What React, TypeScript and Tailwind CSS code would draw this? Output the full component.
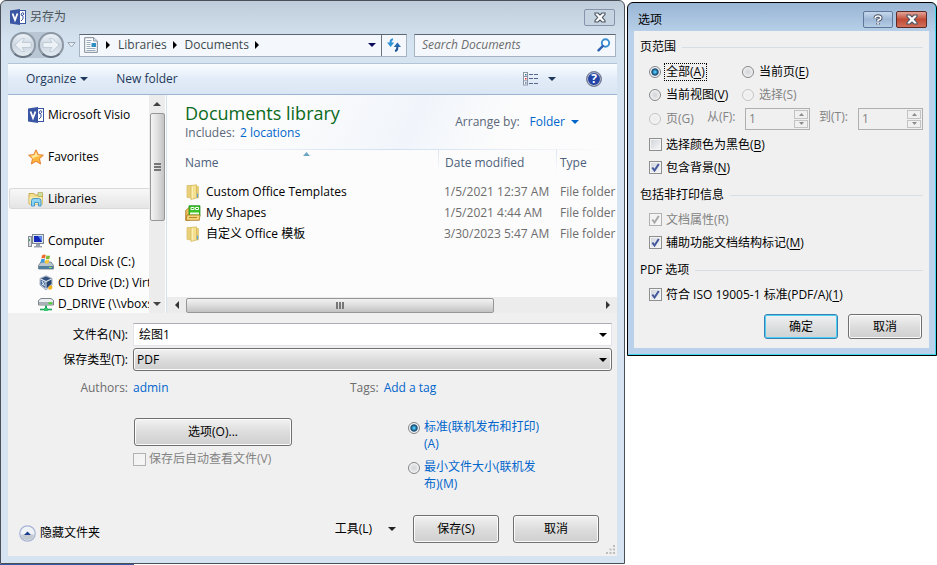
import React, { type ReactNode } from "react";

const FACE = "border border-[#707070] rounded-[3px] bg-linear-to-b from-[#f2f2f2] from-0% via-[#dddddd] via-50% to-[#cfcfcf] shadow-[inset_0_0_0_1px_#fbfbfb]";

/* ---------- icons ---------- */

function VisioIcon() {
  return (
    <svg width="16" height="16" viewBox="0 0 16 16" className="shrink-0">
      <rect x="8.5" y="1.500" width="7" height="13" fill="#fff" stroke="#3955a3" />
      <path d="M0 1.500 10 0v16L0 14.500z" fill="#3955a3" />
      <path d="M2.500 4.500 5 11l2.500-6.500" fill="none" stroke="#fff" strokeWidth="1.800" />
      <path d="M11 5l2-1.500L14 5l-2 2zM11 12l2-2V7" fill="none" stroke="#3955a3" />
    </svg>
  );
}

function StarIcon() {
  return (
    <svg width="16" height="16" viewBox="0 0 16 16" className="shrink-0">
      <path d="M8 .8l2.200 4.800 5.200.6-3.900 3.500 1.100 5.300L8 12.300 3.400 15l1.100-5.300L.6 6.200l5.200-.6z" fill="#fdb73c" stroke="#e2762a" strokeWidth=".9" />
      <path d="M8 2.800l1.500 3.500 3.300.4-5 1.200-4 2 .9-.8L2.800 6.700l3.600-.5z" fill="#ffe79b" />
    </svg>
  );
}

function LibrariesIcon() {
  return (
    <svg width="16" height="16" viewBox="0 0 16 16" className="shrink-0">
      <path d="M1 2.500h5l1 1.500h7.500v9H1z" fill="#f3df8d" stroke="#c9a94d" />
      <path d="M10 1.500h4.500v4H10z" fill="#c7e29b" stroke="#b39b48" strokeWidth=".6" />
      <path d="M1.500 6h13v7h-13z" fill="#f8e9a8" />
      <path d="M3.500 15V9.500Q3.500 7.500 6 7.500h4.500q2.500 0 2.500 2V15h-2.500v-3.500h-4V15z" fill="#8fd3f3" stroke="#3d93c8" strokeWidth=".9" />
    </svg>
  );
}

function ComputerIcon() {
  return (
    <svg width="16" height="16" viewBox="0 0 16 16" className="shrink-0">
      <rect x=".5" y="3.500" width="3" height="10" fill="#d9dde2" stroke="#868d96" />
      <path d="M1.500 6v2" stroke="#35a845" />
      <rect x="4.500" y="1.500" width="11" height="9" fill="#dfe4ea" stroke="#7c8794" />
      <path d="M6 3h8v6H6z" fill="#1429b8" />
      <path d="M10 3h4v6z" fill="#5a86ea" />
      <path d="M8 11h4v2H8zM6 13h8v1.500H6z" fill="#9aa3ad" />
    </svg>
  );
}

function LocalDiskIcon() {
  return (
    <svg width="16" height="16" viewBox="0 0 16 16" className="shrink-0">
      <path d="M3 8h10l2.500 3.500v3.500H.5v-3.500z" fill="#b9c6d0" stroke="#647482" strokeWidth=".8" />
      <path d="M1 12h14v3H1z" fill="#4f7f9c" />
      <path d="M11 13h2.500v1H11z" fill="#8df05a" />
      <path d="M4 1.500Q6 0 7.700 1L7 4.500q-1.800-1-3.600 0z" fill="#ee6b2d" />
      <path d="M8.500 1.200q1.800 1 3.600.2l-.8 3.500q-1.700.8-3.500-.2z" fill="#7dbb35" />
      <path d="M3.200 5.300q1.900-1 3.700 0l-.8 3.500q-1.800-1-3.700 0z" fill="#3b98dc" />
      <path d="M7.600 5.600q1.800 1 3.600.1l-.8 3.500q-1.800.8-3.500-.2z" fill="#fbc72e" />
    </svg>
  );
}

function CdDriveIcon() {
  return (
    <svg width="16" height="16" viewBox="0 0 16 16" className="shrink-0">
      <path d="M8 .8l6 2.700v6.500L8 15 2 10V3.500z" fill="#dfe6ee" stroke="#7f8fa3" strokeWidth=".7" />
      <path d="M8 1.500l5 2-5 2.500-5-2.500z" fill="#31507e" />
      <path d="M2.500 4.500 7.500 7v6.500l-5-4z" fill="#4d6f9f" />
      <path d="M4 6l2.500 5M4 10l2.500-2.500M10 8l2.500-1.500v3L10 11z" fill="none" stroke="#e8eef6" />
      <path d="M8.500 7 13.500 4.500V9l-5 4.500z" fill="#27446f" />
      <path d="M10 12.500l2.500-2.500 2 1.500-.5 2.500-3 1z" fill="#f6b420" />
    </svg>
  );
}

function NetworkDriveIcon() {
  return (
    <svg width="16" height="16" viewBox="0 0 16 16" className="shrink-0">
      <path d="M3 2.500h10l2.500 2v4.500H.5V4.500z" fill="#eceff1" stroke="#6f777e" strokeWidth=".9" />
      <path d="M1 6h14v3H1z" fill="#a9b0b6" />
      <path d="M10.500 6.300H14v2h-3.500z" fill="#45d62c" />
      <path d="M8 9.500v4" stroke="#1fa85b" strokeWidth="2" />
      <path d="M2 13.500h12" stroke="#1fa85b" strokeWidth="1.600" />
      <path d="M6 12h4v3H6z" fill="#35c873" />
    </svg>
  );
}

function FolderIcon() {
  return (
    <svg width="16" height="16" viewBox="0 0 16 16" className="shrink-0">
      <path d="M2 1.500h5v12.500l-5-.5z" fill="#ead07a" stroke="#d6bb62" strokeWidth=".7" />
      <path d="M6 1.500 11.500.800V14L6 15.500z" fill="#f5e08f" stroke="#cfb152" strokeWidth=".7" />
      <path d="M11.500 2.500h2V14h-2z" fill="#e9cd6e" stroke="#cfb152" strokeWidth=".5" />
      <path d="M12.500 9.500v4" stroke="#5fa6de" strokeWidth="1.200" />
      <path d="M7.200 2.500v12" stroke="#fff6cb" />
    </svg>
  );
}

function ShapesIcon() {
  return (
    <svg width="16" height="16" viewBox="0 0 16 16" className="shrink-0">
      <path d="M.7 5.500 4 2.500h2V14l-2 1.300H.7z" fill="#e9c05a" stroke="#a8741d" strokeWidth=".8" />
      <path d="M4 .7h11v10H4z" fill="#3ec22c" stroke="#1c8b12" strokeWidth=".7" />
      <path d="M6 2.500h3v2H6zM10.500 2.500h3v2h-3z" fill="#2fa51f" stroke="#f0ffec" />
      <path d="M5 7.500h9v2H5z" fill="#f0ffec" />
      <path d="M2 10h13l-.7 5.300H1z" fill="#f3d478" stroke="#a8741d" strokeWidth=".8" />
      <path d="M4 12.500h8" stroke="#b8862b" />
    </svg>
  );
}

function DocumentIcon() {
  return (
    <svg width="14" height="16" viewBox="0 0 14 16" className="shrink-0">
      <path d="M.7.700h9L13.300 4v11.300H.7z" fill="#fff" stroke="#7b8796" />
      <path d="M9.500.700V4h3.800" fill="#dde3ea" stroke="#7b8796" strokeWidth=".8" />
      <path d="M2.500 3.500h5M2.500 5.500h4M2.500 7.500h4M2.500 9.500h4M2.500 11.500h9M2.500 13.500h9" stroke="#8ea0b6" strokeWidth=".9" />
      <path d="M7.500 6h4.500v4H7.500z" fill="#2f8fc2" />
    </svg>
  );
}

function RefreshIcon() {
  return (
    <svg width="14" height="14" viewBox="0 0 14 14">
      <path d="M6 1.200Q3.600 1.500 3.600 4v1" fill="none" stroke="#2f93d6" strokeWidth="2" />
      <path d="M0 4.500h7.200L3.600 9z" fill="#2f93d6" />
      <path d="M8 13q2.300-.5 2.300-3V8.500" fill="none" stroke="#1f5596" strokeWidth="2" />
      <path d="M6.800 9H14l-3.600-4.500z" fill="#2468ad" />
    </svg>
  );
}

function SearchIcon() {
  return (
    <svg width="14" height="14" viewBox="0 0 14 14" className="shrink-0">
      <circle cx="8.500" cy="5" r="3.700" fill="#fff" stroke="#3a8fd2" strokeWidth="1.900" />
      <path d="M5.800 8 1.500 12.300" stroke="#2a5fae" strokeWidth="2.400" strokeLinecap="round" />
    </svg>
  );
}

function ViewIcon() {
  return (
    <svg width="16" height="14" viewBox="0 0 16 14">
      <rect x=".5" y=".5" width="4" height="12.500" fill="#fff" stroke="#8a97a8" />
      <path d="M1 4.500h3M1 8.800h3" stroke="#8a97a8" />
      <path d="M2 2h1.500v1.500H2z" fill="#4a6f9f" />
      <path d="M2 6h1.500v1.500H2z" fill="#d0302f" />
      <path d="M2 10.300h1.500v1.500H2z" fill="#4a6f9f" />
      <path d="M6 2.500h4M11 2.500h4M6 6.500h4M11 6.500h4M6 11.500h4M11 11.500h4" stroke="#54698a" />
    </svg>
  );
}

function Arrow({ dir = "down", color = "#000" }: { dir?: "down" | "up" | "left" | "right"; color?: string }) {
  if (dir === "down") return <svg width="8" height="4" viewBox="0 0 8 4"><path d="M0 0h8L4 4z" fill={color} /></svg>;
  if (dir === "up") return <svg width="8" height="4" viewBox="0 0 8 4"><path d="M0 4h8L4 0z" fill={color} /></svg>;
  if (dir === "left") return <svg width="4" height="8" viewBox="0 0 4 8"><path d="M4 0v8L0 4z" fill={color} /></svg>;
  return <svg width="4" height="8" viewBox="0 0 4 8"><path d="M0 0v8l4-4z" fill={color} /></svg>;
}

function CrossIcon() {
  return (
    <svg width="14" height="11" viewBox="0 0 14 11">
      <path d="M2 1h3l2 2 2-2h3v1.500L9.300 5.500 12 8.500V10H9L7 8l-2 2H2V8.500l2.700-3L2 2.500z" fill="#fff" stroke="#4a5263" strokeWidth="1.100" />
    </svg>
  );
}

function NavCircle({ dir }: { dir: "left" | "right" }) {
  return (
    <button type="button" aria-label={dir === "left" ? "Back" : "Forward"} className="size-[26px] rounded-full border-2 border-[#8d98a5] border-b-[#66727f] bg-linear-to-b from-[#eef3f8] via-[#ccd6e1] to-[#e4ebf2] flex items-center justify-center">
      <svg width="18" height="16" viewBox="0 0 18 16">
        {dir === "left" ? (
          <path d="M1 8l7-6.500h2.500L8 5.500h9v5H8l2.500 4H8z" fill="#edf2f7" stroke="#bac5d1" strokeWidth=".8" />
        ) : (
          <path d="M17 8l-7-6.500H7.500l2.500 4H1v5h9l-2.500 4H10z" fill="#edf2f7" stroke="#bac5d1" strokeWidth=".8" />
        )}
      </svg>
    </button>
  );
}

/* ---------- controls ---------- */

function Check({ id, checked, disabled }: { id: string; checked?: boolean; disabled?: boolean }) {
  return (
    <span className="relative size-[13px] shrink-0">
      <input id={id} type="checkbox" defaultChecked={checked} disabled={disabled} className="peer block appearance-none size-[13px] border border-[#8e8f8f] bg-linear-to-br from-[#cfd4da] to-[#f8f8f8] shadow-[inset_0_0_0_1px_#f4f4f4] disabled:border-[#b1b1b1] disabled:from-[#f0f0f0]" />
      <svg width="13" height="13" viewBox="0 0 13 13" className="absolute inset-0 pointer-events-none hidden peer-checked:block text-[#42579c] peer-disabled:text-[#a8a8a8]">
        <path d="M3.300 6.500 5.500 9.500 9.800 3" fill="none" stroke="currentColor" strokeWidth="2" />
      </svg>
    </span>
  );
}

function Radio({ id, name, checked, disabled }: { id: string; name: string; checked?: boolean; disabled?: boolean }) {
  return (
    <input
      id={id}
      name={name}
      type="radio"
      defaultChecked={checked}
      disabled={disabled}
      className="block shrink-0 appearance-none size-3 rounded-full border border-[#848688] bg-radial from-[#d3d6d9] to-[#f6f6f6] shadow-[inset_0_0_0_1px_#f4f4f4] checked:from-[#4cc2f0] checked:from-10% checked:via-[#14476f] checked:via-45% checked:to-[#e6eaee] checked:to-60% disabled:border-[#c4c4c4] disabled:from-[#ececec]"
    />
  );
}

function Key({ children }: { children: string }) {
  return <span className="underline underline-offset-2">{children}</span>;
}

function CheckRow({ id, checked, disabled, children }: { id: string; checked?: boolean; disabled?: boolean; children: ReactNode }) {
  return (
    <div className={`flex h-[23px] items-center gap-1 pl-[9px] ${disabled ? "text-[#838383]" : ""}`}>
      <Check id={id} checked={checked} disabled={disabled} />
      <label htmlFor={id}>{children}</label>
    </div>
  );
}

function Section({ title }: { title: string }) {
  return (
    <div className="flex h-5 items-center gap-[6px] pt-[2px]">
      <h2>{title}</h2>
      <span className="h-px flex-1 bg-[#d5dfe5]" />
    </div>
  );
}

function Spinner({ id }: { id: string }) {
  return (
    <div className="flex h-[22px] w-[65px] border border-[#afafaf]">
      <input id={id} type="number" defaultValue={1} disabled className="w-0 flex-1 appearance-none pl-[3px] text-[#838383] [&::-webkit-inner-spin-button]:appearance-none" />
      <div className="flex w-4 flex-col gap-px p-px">
        <button type="button" disabled aria-label="Increase" className="flex flex-1 items-center justify-center border border-[#c3c3c3]">
          <svg width="5" height="3" viewBox="0 0 5 3"><path d="M0 3h5L2.500 0z" fill="#8c8c8c" /></svg>
        </button>
        <button type="button" disabled aria-label="Decrease" className="flex flex-1 items-center justify-center border border-[#c3c3c3]">
          <svg width="5" height="3" viewBox="0 0 5 3"><path d="M0 0h5L2.500 3z" fill="#8c8c8c" /></svg>
        </button>
      </div>
    </div>
  );
}

/* ---------- save dialog ---------- */

function TreeItem({ icon, label, nested, selected }: { icon: ReactNode; label: string; nested?: boolean; selected?: boolean }) {
  return (
    <li
      className={`flex h-[21px] shrink-0 items-center gap-1 whitespace-nowrap ${nested ? "pl-7" : "pl-[18px]"} ${
        selected ? "rounded-l-[3px] border border-r-0 border-[#d9d9d9] bg-linear-to-b from-[#f8f8f8] to-[#e5e5e5]" : "border border-transparent"
      }`}
    >
      {icon}
      {label}
    </li>
  );
}

function AddressBar() {
  return (
    <div className="flex h-[26px] items-center pl-[2px] pr-px">
      <div className="flex items-center gap-[2px] rounded-full bg-[#b9c6d3]">
        <NavCircle dir="left" />
        <NavCircle dir="right" />
      </div>
      <svg width="9" height="6" viewBox="0 0 9 6" className="ml-[3px] shrink-0"><path d="M.8.500h7.400L4.500 5z" fill="#e9eff5" stroke="#9aa7b5" /></svg>
      <nav aria-label="Location" className="ml-[3px] flex h-[23px] flex-1 items-center border border-[#a5b2bf] border-t-[#5c6670] bg-[#f4f7fb] pl-1 text-[#3c4a4e]">
        <DocumentIcon />
        <span className="ml-2"><Arrow dir="right" /></span>
        <a href="#libraries" className="ml-2">Libraries</a>
        <span className="ml-[6px]"><Arrow dir="right" /></span>
        <a href="#documents" className="ml-2">Documents</a>
        <span className="ml-[6px]"><Arrow dir="right" /></span>
        <button type="button" aria-label="Previous locations" className="ml-auto mr-[5px]"><Arrow color="#0a0a5c" /></button>
        <button type="button" aria-label="Refresh" className="flex h-full w-[25px] items-center justify-center border-l border-[#6a747e]"><RefreshIcon /></button>
      </nav>
      <div className="ml-[7px] flex h-[23px] w-[202px] items-center border border-[#a5b2bf] border-t-[#5c6670] bg-[#f4f7fb] pl-[6px] pr-1">
        <input type="search" aria-label="Search Documents" placeholder="Search Documents" className="w-0 flex-1 pl-px italic outline-none placeholder:text-[#6d6d6d]" />
        <SearchIcon />
      </div>
    </div>
  );
}

function Sidebar() {
  return (
    <div className="flex w-[159px] shrink-0 border-r border-[#d5e2f2] bg-[#fcfcfc]">
      <ul className="flex w-[141px] flex-col overflow-hidden pl-px pt-[9px] text-black">
        <TreeItem icon={<VisioIcon />} label="Microsoft Visio" />
        <li className="h-[21px] shrink-0" />
        <TreeItem icon={<StarIcon />} label="Favorites" />
        <li className="h-[21px] shrink-0" />
        <TreeItem icon={<LibrariesIcon />} label="Libraries" selected />
        <li className="h-[21px] shrink-0" />
        <TreeItem icon={<ComputerIcon />} label="Computer" />
        <TreeItem nested icon={<LocalDiskIcon />} label="Local Disk (C:)" />
        <TreeItem nested icon={<CdDriveIcon />} label="CD Drive (D:) Virt" />
        <TreeItem nested icon={<NetworkDriveIcon />} label="D_DRIVE (\\vboxs" />
      </ul>
      <div className="flex w-4 flex-col items-center bg-[#ececec]">
        <span className="flex h-[18px] items-center"><Arrow dir="up" color="#444" /></span>
        <div className="flex h-[108px] w-[15px] flex-col items-center justify-center gap-px rounded-[2px] border border-[#979797] bg-linear-to-r from-[#f4f4f4] via-[#dfdfdf] to-[#c4c4c4]">
          <span className="h-[2px] w-[7px] bg-[#777]" />
          <span className="h-[2px] w-[7px] bg-[#777]" />
          <span className="h-[2px] w-[7px] bg-[#777]" />
        </div>
        <span className="mt-auto flex h-[18px] items-center"><Arrow color="#444" /></span>
      </div>
    </div>
  );
}

const FILES = [
  { icon: <FolderIcon />, name: "Custom Office Templates", date: "1/5/2021 12:37 AM" },
  { icon: <ShapesIcon />, name: "My Shapes", date: "1/5/2021 4:44 AM" },
  { icon: <FolderIcon />, name: "自定义 Office 模板", date: "3/30/2023 5:47 AM" },
];

function FilePane() {
  return (
    <div className="flex min-w-0 flex-1 flex-col overflow-hidden bg-[#fcfcfc]">
      <div className="flex h-[54px] justify-between bg-linear-115 from-[#fcfcfc] from-25% via-[#f1f5fb] via-55% to-[#fcfcfc] to-75% pl-[18px] pr-[38px]">
        <div className="pt-[6px]">
          <h1 className="text-lg/6 text-[#0b6a1c]">Documents library</h1>
          <p className="text-[#5a6779]">
            Includes: <a href="#locations" className="ml-[2px] text-[#0066cc]">2 locations</a>
          </p>
        </div>
        <div className="flex items-center gap-[10px] text-[#5a6779]">
          <span>Arrange by:</span>
          <button type="button" className="flex items-center gap-[6px] text-[#0066cc]">
            Folder <Arrow color="#0066cc" />
          </button>
        </div>
      </div>
      <div className="ml-2 mr-1 h-px bg-linear-to-r from-transparent via-[#d0dff0] to-transparent" />
      <table className="w-full table-fixed border-collapse text-left whitespace-nowrap">
        <colgroup>
          <col />
          <col className="w-[118px]" />
          <col className="w-[61px]" />
        </colgroup>
        <thead>
          <tr className="h-[31px] text-[#4c607a]">
            <th className="relative pl-[18px] pb-[6px] font-normal">
              Name
              <span className="absolute left-1/2 top-[2px]"><svg width="7" height="4" viewBox="0 0 7 4"><path d="M0 4h7L3.500 0z" fill="#6da5c4" /></svg></span>
            </th>
            <th className="bg-linear-to-b from-[#d9e5f2] to-transparent bg-[length:1px_22px] bg-no-repeat pl-[7px] pb-[6px] font-normal">Date modified</th>
            <th className="bg-linear-to-b from-[#d9e5f2] to-transparent bg-[length:1px_22px] bg-no-repeat pl-1 pb-[6px] font-normal">Type</th>
          </tr>
        </thead>
        <tbody>
          {FILES.map((f) => (
            <tr key={f.name} className="h-[21px] text-[#6d6d6d]">
              <td className="pl-[18px]">
                <span className="flex items-center gap-[5px] text-black">{f.icon}{f.name}</span>
              </td>
              <td className="pl-[6px]">{f.date}</td>
              <td className="overflow-hidden pl-1">File folder</td>
            </tr>
          ))}
        </tbody>
      </table>
      <div className="mt-auto flex h-4 items-center bg-[#ececec]">
        <span className="flex w-[19px] justify-center"><Arrow dir="left" color="#333" /></span>
        <div className="flex h-[15px] w-[308px] items-center justify-center gap-px rounded-[2px] border border-[#979797] bg-linear-to-b from-[#f2f2f2] via-[#dcdcdc] to-[#c2c2c2]">
          <span className="h-[7px] w-[2px] bg-[#777]" />
          <span className="h-[7px] w-[2px] bg-[#777]" />
          <span className="h-[7px] w-[2px] bg-[#777]" />
        </div>
        <span className="ml-auto flex w-[18px] justify-center"><Arrow dir="right" color="#333" /></span>
      </div>
    </div>
  );
}

function SaveForm() {
  return (
    <form className="relative bg-[#f0f0f0] pt-[10px] pb-[13px] pr-[5px]" onSubmit={(e) => e.preventDefault()}>
      <div className="flex items-center gap-[5px]">
        <label htmlFor="file-name" className="w-[120px] text-right">文件名(N):</label>
        <div className="flex h-[23px] flex-1 items-center border border-[#e2e3ea] border-t-[#abadb3] bg-white pr-1">
          <input id="file-name" defaultValue="绘图1" className="w-0 flex-1 pl-[5px] outline-none" />
          <button type="button" aria-label="Show file names"><Arrow /></button>
        </div>
      </div>
      <div className="mt-[2px] flex items-center gap-[5px]">
        <label htmlFor="file-type" className="w-[120px] text-right">保存类型(T):</label>
        <div className="relative flex-1">
          <select id="file-type" className={`block h-[23px] w-full appearance-none pl-[3px] outline-none ${FACE}`}>
            <option>PDF</option>
          </select>
          <span className="pointer-events-none absolute right-[5px] top-1/2 -translate-y-1/2 flex"><Arrow /></span>
        </div>
      </div>
      <div className="mt-[7px] flex h-5 items-center gap-[5px] text-[#6d6d6d]">
        <span className="w-[120px] text-right">Authors:</span>
        <a href="#author" className="w-[212px] text-[#0066cc]">admin</a>
        <span>Tags:</span>
        <a href="#tag" className="text-[#0066cc]">Add a tag</a>
      </div>
      <div className="mt-5 flex pl-[125px]">
        <div className="w-[275px]">
          <button type="button" className={`ml-px block h-7 w-[158px] ${FACE}`}>选项(O)...</button>
          <div className="mt-[5px] flex items-center gap-[3px] text-[#838383]">
            <Check id="open-after" disabled />
            <label htmlFor="open-after">保存后自动查看文件(V)</label>
          </div>
        </div>
        <div className="flex flex-col gap-[6px] text-[#0066cc]">
          <div className="flex gap-1">
            <span className="pt-1"><Radio id="opt-standard" name="optimize" checked /></span>
            <label htmlFor="opt-standard" className="w-[120px] leading-[17px]">标准(联机发布和打印)(A)</label>
          </div>
          <div className="flex gap-1">
            <span className="pt-1"><Radio id="opt-minimum" name="optimize" /></span>
            <label htmlFor="opt-minimum" className="w-[120px] leading-[17px]">最小文件大小(联机发布)(M)</label>
          </div>
        </div>
      </div>
      <div className="mt-[23px] flex items-center pl-[11px] pr-[13px]">
        <button type="button" className="flex items-center gap-1 pt-2">
          <svg width="17" height="17" viewBox="0 0 17 17">
            <circle cx="8.500" cy="8.500" r="7.700" fill="#f0f3f5" stroke="#a9b4d6" strokeWidth="1.300" />
            <path d="M2 9.500h13a6.500 5.500 0 0 1-13 0z" fill="#c3cad0" />
            <path d="M5 10h7L8.500 6.500z" fill="#1c3f94" />
          </svg>
          隐藏文件夹
        </button>
        <button type="button" className="ml-auto flex items-center gap-4 pr-[17px]">
          工具(L) <Arrow color="#222" />
        </button>
        <button type="submit" className={`h-7 w-[86px] ${FACE}`}>保存(S)</button>
        <button type="button" className={`ml-[14px] h-7 w-[86px] ${FACE}`}>取消</button>
      </div>
      <svg width="9" height="9" viewBox="0 0 9 9" className="absolute right-[2px] bottom-[2px]">
        <path d="M7 0h2v2H7zM7 3.500h2v2H7zM3.500 3.500h2v2h-2zM7 7h2v2H7zM3.500 7h2v2h-2zM0 7h2v2H0z" fill="#bdbdbd" />
      </svg>
    </form>
  );
}

function SaveDialog() {
  return (
    <section aria-label="另存为" className="rounded-t-[6px] border border-[#4a4f58] bg-linear-to-b from-[#bfccd9] to-[#d6e4f2] to-[42px] px-[7px] pb-[7px]">
      <header className="flex h-[31px] items-center gap-1 pl-[2px] pr-[2px] pt-px">
        <VisioIcon />
        <span className="text-[#4a5358]">另存为</span>
        <button type="button" aria-label="Close" className="ml-auto flex h-[17px] w-[31px] items-center justify-center rounded-[2px] border border-[#8793ad] bg-[#c6d3e0]">
          <CrossIcon />
        </button>
      </header>
      <AddressBar />
      <div className="mt-[5px] flex h-8 items-center border-t border-b border-t-[#b3c4d9] border-b-[#9fb4cd] bg-linear-to-b from-[#fafdff] via-[#e2ecf8] via-50% to-[#dbe6f4] pl-[18px] pr-[15px] text-[#1e395b]">
        <button type="button" className="flex items-center gap-1">Organize <Arrow color="#1e395b" /></button>
        <button type="button" className="ml-7">New folder</button>
        <button type="button" aria-label="Change view" className="ml-auto flex items-center gap-[9px]"><ViewIcon /><Arrow color="#1e395b" /></button>
        <button type="button" aria-label="Help" className="ml-[30px] flex size-4 items-center justify-center rounded-full border border-[#7d8391] bg-[#2444a8] text-xs font-bold text-white ring-1 ring-[#b9bcc4] ring-inset">?</button>
      </div>
      <div className="flex h-[218px]">
        <Sidebar />
        <FilePane />
      </div>
      <SaveForm />
    </section>
  );
}

/* ---------- options dialog ---------- */

function OptionsDialog() {
  return (
    <section aria-label="选项" className="mt-[2px] w-[310px] shrink-0 rounded-t-[6px] border border-black bg-linear-to-b from-[#98b5d4] to-[#b9d1ea] to-[30px] pl-[6px] pr-[7px] pb-[7px] shadow-[inset_-1px_-1px_0_#3fd6ee]">
      <header className="flex h-7 items-center pl-1 pr-[2px] pt-[5px]">
        <span className="text-black">选项</span>
        <button type="button" aria-label="Help" className="ml-auto flex h-[17px] w-[30px] items-center justify-center rounded-[2px] border border-[#5f7699] bg-linear-to-b from-[#c6d9ee] via-[#9fb8d5] to-[#b6cde6]">
          <svg width="10" height="12" viewBox="0 0 10 12">
            <path d="M2.200 4.200Q2.200 2 5 2t2.800 2Q7.800 5.300 5 6.300V7.500M5 9v1.500" fill="none" stroke="#4a5263" strokeWidth="3.400" />
            <path d="M2.200 4.200Q2.200 2 5 2t2.800 2Q7.800 5.300 5 6.300V7.500M5 9v1.500" fill="none" stroke="#fff" strokeWidth="1.600" />
          </svg>
        </button>
        <button type="button" aria-label="Close" className="ml-[3px] flex h-[17px] w-[31px] items-center justify-center rounded-[2px] border border-[#5b2a26] bg-linear-to-b from-[#e2a398] via-[#c04a35] via-50% to-[#d0705a]">
          <CrossIcon />
        </button>
      </header>
      <form className="bg-[#f0f0f0] px-[6px] pt-[5px] pb-[9px]" onSubmit={(e) => e.preventDefault()}>
        <Section title="页范围" />
        <div className="mt-1 grid grid-cols-[93px_1fr] pl-[9px]">
          <div className="flex h-[23px] items-center gap-[3px]">
            <Radio id="r-all" name="range" checked />
            <label htmlFor="r-all" className="border border-dotted border-black px-px leading-4">全部(<Key>A</Key>)</label>
          </div>
          <div className="flex h-[23px] items-center gap-[5px]">
            <Radio id="r-page" name="range" />
            <label htmlFor="r-page">当前页(<Key>E</Key>)</label>
          </div>
          <div className="flex h-[23px] items-center gap-[5px]">
            <Radio id="r-view" name="range" />
            <label htmlFor="r-view">当前视图(<Key>V</Key>)</label>
          </div>
          <div className="flex h-[23px] items-center gap-[5px] text-[#838383]">
            <Radio id="r-sel" name="range" disabled />
            <label htmlFor="r-sel">选择(S)</label>
          </div>
        </div>
        <div className="flex h-[26px] items-center pl-[9px] text-[#838383]">
          <div className="flex w-[58px] items-center gap-[5px]">
            <Radio id="r-pages" name="range" disabled />
            <label htmlFor="r-pages">页(G)</label>
          </div>
          <label htmlFor="from" className="w-[38px] pb-1">从(F):</label>
          <Spinner id="from" />
          <label htmlFor="to" className="ml-auto w-[39px] pb-1">到(T):</label>
          <Spinner id="to" />
        </div>
        <div className="mt-px">
          <CheckRow id="black">选择颜色为黑色(<Key>B</Key>)</CheckRow>
          <CheckRow id="bg" checked>包含背景(<Key>N</Key>)</CheckRow>
        </div>
        <div className="mt-[5px]"><Section title="包括非打印信息" /></div>
        <div className="mt-1">
          <CheckRow id="props" checked disabled>文档属性(R)</CheckRow>
          <CheckRow id="tags" checked>辅助功能文档结构标记(<Key>M</Key>)</CheckRow>
        </div>
        <div className="mt-[5px]"><Section title="PDF 选项" /></div>
        <div className="mt-1">
          <CheckRow id="iso" checked>符合 ISO 19005-1 标准(PDF/A)(<Key>1</Key>)</CheckRow>
        </div>
        <div className="mt-2 flex justify-end gap-[10px] pr-px">
          <button type="submit" className="h-[25px] w-[74px] rounded-[3px] border border-[#3c7fb1] bg-linear-to-b from-[#f0f2f3] via-[#dddfe0] via-50% to-[#cfd3d5] shadow-[inset_0_0_0_1px_#48d0f5]">确定</button>
          <button type="button" className={`h-[25px] w-[74px] ${FACE}`}>取消</button>
        </div>
      </form>
    </section>
  );
}

export default function App() {
  return (
    <main className="flex items-start gap-[2px] bg-white font-['Open_Sans','Noto_Sans_CJK_SC',sans-serif] text-xs/4 text-black">
      <div className="min-w-0 flex-1">
        <SaveDialog />
        <div className="h-px w-[134px] bg-[#3955a3]" />
      </div>
      <OptionsDialog />
    </main>
  );
}
